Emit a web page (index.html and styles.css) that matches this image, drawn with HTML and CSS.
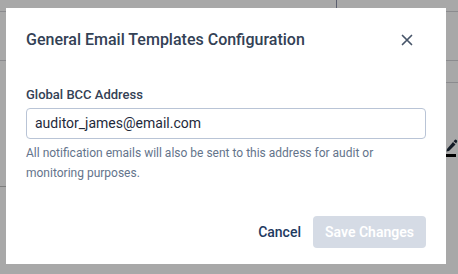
FILE: index.html
```html
<!DOCTYPE html>
<html>
<head>
<meta charset="utf-8">
<link rel="stylesheet" href="styles.css">
</head>
<body>
<div class="page">
  <div class="page-line line-a"></div>
  <div class="page-vline"></div>
  <div class="page-line line-b"></div>
  <div class="page-line line-c"></div>
  <div class="page-dash"></div>
  <svg class="page-pen" width="12" height="20" viewBox="0 0 12 20">
    <path d="M1 11 L7 4 L9.5 6.5 L3 13 L0.5 13.5 Z" fill="#1e293b"/>
    <path d="M7.5 3.2 L9 1.8 Q9.8 1.2 10.5 1.9 L11 2.4 Q11.6 3.1 11 3.8 L10.2 5.6 Z" fill="#1e293b"/>
    <rect x="0" y="16" width="10" height="3" fill="#000"/>
  </svg>
</div>
<div class="overlay">
  <div class="modal">
    <div class="modal-header">
      <h2 class="modal-title">General Email Templates Configuration</h2>
      <button class="close-btn" aria-label="Close">
        <svg width="12" height="12" viewBox="0 0 12 12">
          <path d="M1.5 1.5 L10.5 10.5 M10.5 1.5 L1.5 10.5" stroke="#475569" stroke-width="1.7" stroke-linecap="round"/>
        </svg>
      </button>
    </div>
    <div class="modal-body">
      <label class="field-label">Global BCC Address</label>
      <div class="text-input">auditor_james@email.com</div>
      <p class="help-text">All notification emails will also be sent to this address for audit or monitoring purposes.</p>
    </div>
    <div class="modal-footer">
      <button class="btn-cancel">Cancel</button>
      <button class="btn-save">Save Changes</button>
    </div>
  </div>
</div>
</body>
</html>
```
FILE: styles.css
```css
* { box-sizing: border-box; }
html, body { margin: 0; padding: 0; }
body {
  width: 458px;
  height: 274px;
  overflow: hidden;
  font-family: Roboto, "Liberation Sans", sans-serif;
  background: #fff;
  position: relative;
}
.page {
  position: absolute;
  inset: 0;
  background: #fff;
}
.page-line {
  position: absolute;
  left: 0;
  right: 0;
  height: 1px;
  background: #d4d4d8;
}
.line-a { top: 11px; }
.line-b { top: 60px; }
.line-c { top: 82px; left: 446px; }
.page-vline {
  position: absolute;
  left: 336px;
  top: 0;
  width: 1px;
  height: 10px;
  background: #8b8fa8;
}
.page-dash {
  position: absolute;
  left: 0;
  top: 186px;
  width: 6px;
  height: 1px;
  background: #c0c0c0;
}
.page-pen {
  position: absolute;
  left: 446px;
  top: 138px;
  overflow: visible;
}
.overlay {
  position: absolute;
  inset: 0;
  background: rgba(0, 0, 0, 0.34);
  padding: 8px 0 0 6px;
}
.modal {
  width: 440px;
  height: 256px;
  background: #fff;
  padding: 20px 20px 0 20px;
  display: flex;
  flex-direction: column;
}
.modal-header {
  display: flex;
  align-items: center;
  justify-content: space-between;
  height: 24px;
}
.modal-title {
  margin: 0;
  font-size: 16px;
  font-weight: 500;
  color: #334155;
  line-height: 24px;
}
.close-btn {
  border: none;
  background: none;
  padding: 0;
  width: 12px;
  height: 12px;
  margin-right: 13px;
  display: flex;
}
.modal-body {
  margin-top: 34px;
  display: flex;
  flex-direction: column;
}
.field-label {
  font-size: 13px;
  font-weight: 500;
  color: #334155;
  line-height: 18px;
}
.text-input {
  margin-top: 4px;
  height: 31px;
  border: 1px solid #b9c4d6;
  border-radius: 4px;
  padding: 0 8px;
  font-size: 14px;
  line-height: 29px;
  color: #1e293b;
}
.help-text {
  margin: 4px 0 0 0;
  font-size: 12px;
  line-height: 20px;
  color: #64748b;
}
.modal-footer {
  margin-top: 33px;
  display: flex;
  justify-content: flex-end;
  align-items: center;
  gap: 12px;
}
.btn-cancel {
  border: none;
  background: none;
  font-family: inherit;
  font-size: 14px;
  font-weight: 500;
  color: #1e3a5f;
  padding: 0;
  height: 32px;
}
.btn-save {
  border: none;
  background: #d5dbe5;
  color: #fff;
  font-family: inherit;
  font-size: 14px;
  font-weight: 600;
  height: 32px;
  width: 113px;
  border-radius: 4px;
  padding: 0;
}
```
